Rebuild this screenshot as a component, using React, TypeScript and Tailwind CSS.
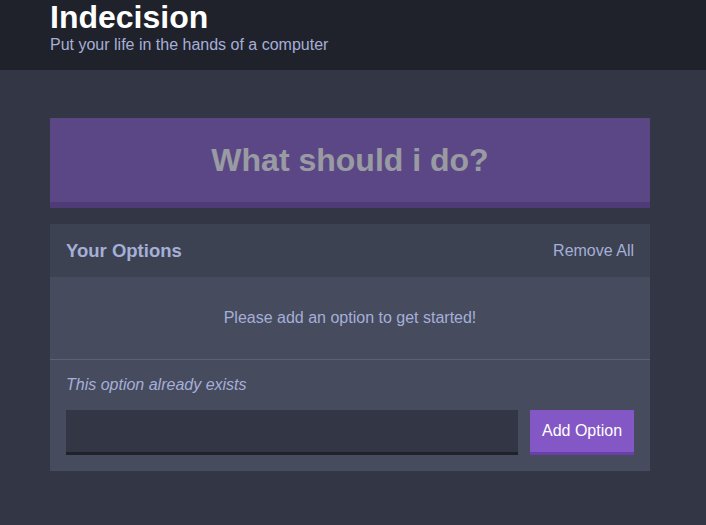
export default function App() {
  return (
    <div className="min-h-[525px] bg-[#333745] font-['Liberation_Sans',Arial,sans-serif] text-white">
      <header className="h-[70px] bg-[#20222b]">
        <div className="ml-[50px] w-[600px] pt-px">
          <h1 className="text-[32px] font-bold leading-none text-white">Indecision</h1>
          <h2 className="mt-[4px] text-[16px] leading-none text-[#a5afd7]">
            Put your life in the hands of a computer
          </h2>
        </div>
      </header>

      <main className="ml-[50px] w-[600px] pt-[48px]">
        <button
          disabled
          className="block h-[90px] w-full border-b-[6px] border-[#6a3fab] bg-[#8357c5] text-[32px] font-bold text-white opacity-50"
        >
          What should i do?
        </button>

        <section className="mt-[16px] bg-[#464b5e]">
          <div className="flex h-[53px] items-center justify-between bg-[#3c4251] px-[16px]">
            <h3 className="text-[18.5px] font-bold text-[#a5afd7]">Your Options</h3>
            <button className="text-[16px] text-[#a5afd7]">Remove All</button>
          </div>

          <p className="border-b border-[#5b6176] py-[32px] text-center text-[16px] leading-[18px] text-[#a5afd7]">
            Please add an option to get started!
          </p>

          <div className="px-[16px] pt-[16px] pb-[16px]">
            <p className="mb-[16px] text-[16px] italic leading-[18px] text-[#a5afd7]">
              This option already exists
            </p>
            <form className="flex gap-[12px]" onSubmit={(e) => e.preventDefault()}>
              <input
                type="text"
                className="h-[45px] flex-1 border-b-[3px] border-[#20222b] bg-[#333745] px-[8px] text-[16px] text-[#a5afd7] outline-none"
              />
              <button className="h-[45px] w-[104px] border-b-[3px] border-[#6a3fab] bg-[#8357c5] text-[16px] text-white">
                Add Option
              </button>
            </form>
          </div>
        </section>
      </main>
    </div>
  );
}
